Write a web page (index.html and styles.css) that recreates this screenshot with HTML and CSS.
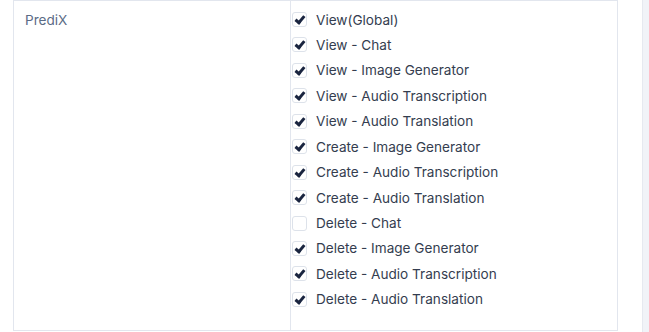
FILE: index.html
```html
<!DOCTYPE html>
<html lang="en">
<head>
  <meta charset="UTF-8" />
  <title>Permissions</title>
  <link rel="stylesheet" href="styles.css">
</head>
<body>
  <div class="page">
    <table class="perm-table">
      <tr>
        <td class="module">PrediX</td>
        <td class="perms">
          <ul class="perm-list">
            <li><span class="box on"></span>View(Global)</li>
            <li><span class="box on"></span>View - Chat</li>
            <li><span class="box on"></span>View - Image Generator</li>
            <li><span class="box on"></span>View - Audio Transcription</li>
            <li><span class="box on"></span>View - Audio Translation</li>
            <li><span class="box on"></span>Create - Image Generator</li>
            <li><span class="box on"></span>Create - Audio Transcription</li>
            <li><span class="box on"></span>Create - Audio Translation</li>
            <li><span class="box"></span>Delete - Chat</li>
            <li><span class="box on"></span>Delete - Image Generator</li>
            <li><span class="box on"></span>Delete - Audio Transcription</li>
            <li><span class="box on"></span>Delete - Audio Translation</li>
          </ul>
        </td>
      </tr>
    </table>
    <div class="scrollbar"></div>
  </div>
</body>
</html>
```

FILE: styles.css
```css
body {
  margin: 0;
  font-family: Inter, "Noto Sans", sans-serif;
  background: #fff;
  overflow: hidden;
}

.page {
  display: flex;
  height: 332px;
}

.perm-table {
  border-collapse: collapse;
  margin-left: 13px;
  width: 605px;
  height: 331px;
  align-self: flex-start;
}

.perm-table td {
  border: 1px solid #e2e6ee;
  vertical-align: top;
}

.module {
  width: 254px;
  padding: 9px 11px;
  font-size: 13.6px;
  line-height: 21px;
  color: #5b6b86;
}

.perms {
  padding: 8px 0 0 1px;
}

.perm-list {
  list-style: none;
  margin: 0;
  padding: 0;
  display: flex;
  flex-direction: column;
  gap: 4.45px;
}

.perm-list li {
  display: flex;
  align-items: center;
  height: 21px;
  font-size: 13.6px;
  color: #343d4f;
}

.box {
  width: 15px;
  height: 15px;
  box-sizing: border-box;
  border: 1px solid #dde2ea;
  border-radius: 3px;
  margin-right: 9px;
  position: relative;
}

.box.on::after {
  content: "";
  position: absolute;
  left: 4px;
  top: 1px;
  width: 3px;
  height: 7px;
  border: solid #1a2540;
  border-width: 0 3px 3px 0;
  transform: rotate(40deg);
}

.scrollbar {
  margin-left: auto;
  width: 6px;
  height: 332px;
  background: #f1f3f8;
  border-left: 1px solid #e6e9f0;
}
```
